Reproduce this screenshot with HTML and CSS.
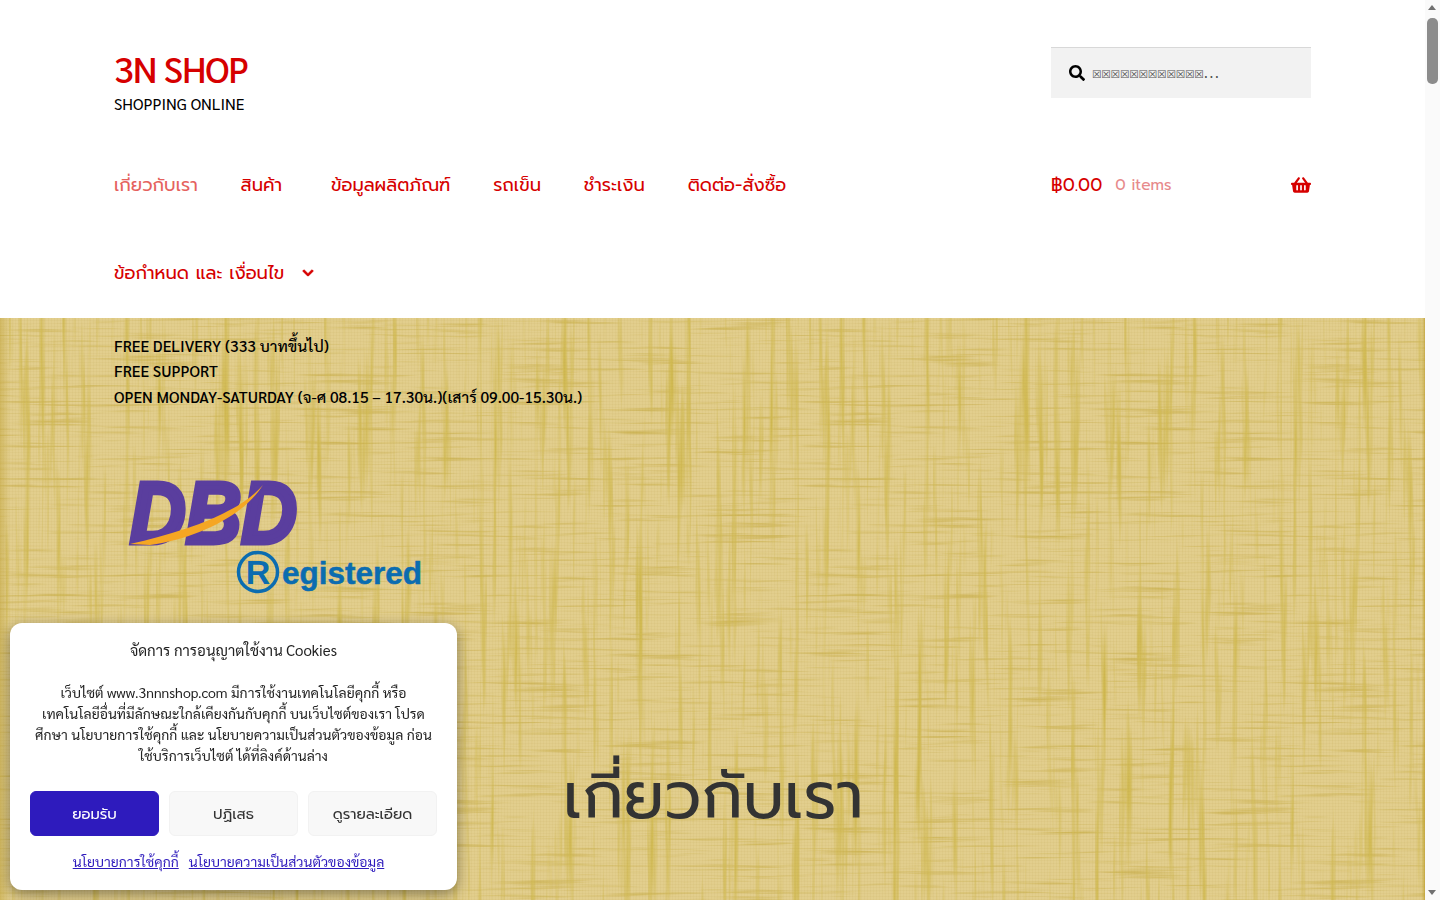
FILE: index.html
```html
<!DOCTYPE html>
<html lang="th">
<head>
<meta charset="utf-8">
<title>เกี่ยวกับเรา – 3N SHOP</title>
<link rel="stylesheet" href="styles.css">
</head>
<body>
<div class="page">
<header class="site-header">
  <div class="col-full brand-row">
    <div class="branding">
      <a class="site-title" href="#">3N SHOP</a>
      <p class="tagline">SHOPPING ONLINE</p>
    </div>
    <form class="search">
      <svg class="search-icon" viewBox="0 0 512 512" aria-hidden="true"><path d="M505 442.700L405.300 343c-4.500-4.500-10.600-7-17-7H372c27.600-35.300 44-79.700 44-128C416 93.100 322.900 0 208 0S0 93.100 0 208s93.100 208 208 208c48.300 0 92.700-16.400 128-44v16.300c0 6.400 2.500 12.500 7 17l99.700 99.700c9.400 9.400 24.600 9.400 33.900 0l28.300-28.300c9.400-9.400 9.400-24.600.1-34zM208 336c-70.700 0-128-57.200-128-128 0-70.700 57.200-128 128-128 70.700 0 128 57.200 128 128 0 70.700-57.200 128-128 128z"/></svg>
      <span class="search-ph"><span class="tofu">☒☒☒☒☒☒☒☒☒☒☒☒</span>...</span>
    </form>
  </div>
  <div class="col-full nav-row">
    <nav class="main-nav">
      <a class="nav-link current" href="#">เกี่ยวกับเรา</a>
      <a class="nav-link wide" href="#">สินค้า</a>
      <a class="nav-link" href="#">ข้อมูลผลิตภัณฑ์</a>
      <a class="nav-link" href="#">รถเข็น</a>
      <a class="nav-link" href="#">ชำระเงิน</a>
      <a class="nav-link" href="#">ติดต่อ-สั่งซื้อ</a>
      <a class="nav-link" href="#">ข้อกำหนด และ เงื่อนไข<svg class="chevron" viewBox="0 0 448 512" aria-hidden="true"><path d="M207 381.500L12.700 187.100c-9.400-9.400-9.400-24.600 0-33.900l22.700-22.700c9.400-9.400 24.500-9.400 33.900 0L224 284.500l154.700-154c9.400-9.300 24.500-9.300 33.900 0l22.700 22.700c9.400 9.400 9.400 24.600 0 33.900L241 381.500c-9.400 9.300-24.600 9.300-34 0z"/></svg></a>
    </nav>
    <a class="cart" href="#">
      <span class="amount">฿0.00</span>
      <span class="count">0 items</span>
      <svg class="basket" viewBox="0 0 576 512" aria-hidden="true"><path d="M576 216v16c0 13.300-10.700 24-24 24h-8l-26.100 182.800C514.500 462.500 494.200 480 470.300 480H105.700c-23.900 0-44.200-17.500-47.500-41.200L32 256h-8c-13.300 0-24-10.700-24-24v-16c0-13.300 10.700-24 24-24h67.300l106.800-146.800c10.400-14.300 30.400-17.500 44.700-7.100 14.300 10.400 17.500 30.400 7.100 44.700L170.400 192h235.200L326.100 82.800c-10.400-14.300-7.200-34.300 7.100-44.700 14.300-10.400 34.300-7.200 44.700 7.100L484.700 192H552c13.300 0 24 10.700 24 24zM312 392V280c0-13.300-10.700-24-24-24s-24 10.700-24 24v112c0 13.300 10.700 24 24 24s24-10.700 24-24zm112 0V280c0-13.300-10.700-24-24-24s-24 10.700-24 24v112c0 13.300 10.700 24 24 24s24-10.700 24-24zm-224 0V280c0-13.300-10.700-24-24-24s-24 10.700-24 24v112c0 13.300 10.700 24 24 24s24-10.700 24-24z"/></svg>
    </a>
  </div>
</header>

<main class="content">
  <div class="col-full">
    <div class="notice">
      <p>FREE DELIVERY (333 บาทขึ้นไป)</p>
      <p>FREE SUPPORT</p>
      <p>OPEN MONDAY-SATURDAY (จ-ศ 08.15 – 17.30น.)(เสาร์ 09.00-15.30น.)</p>
    </div>
    <div class="columns">
      <aside class="sidebar">
        <svg class="dbd" viewBox="0 0 320 150" role="img" aria-label="DBD Registered">
          <text class="dbd-letters" x="16" y="90" textLength="167" lengthAdjust="spacingAndGlyphs">DBD</text>
          <path class="dbd-swoosh" d="M16 91C70 79 125 60 149 32C130 62 85 85 36 92Z"/>
          <circle class="reg-ring" cx="144" cy="119" r="19.500"/>
          <text class="reg-r" x="144" y="131" text-anchor="middle">R</text>
          <text class="reg-word" x="168" y="131" textLength="140" lengthAdjust="spacingAndGlyphs">egistered</text>
        </svg>
      </aside>
      <article class="article">
        <h1 class="page-title">เกี่ยวกับเรา</h1>
      </article>
    </div>
  </div>
</main>
</div>

<section class="cookie">
  <p class="cookie-title">จัดการ การอนุญาตใช้งาน Cookies</p>
  <p class="cookie-text">เว็บไซต์ www.3nnnshop.com มีการใช้งานเทคโนโลยีคุกกี้ หรือ เทคโนโลยีอื่นที่มีลักษณะใกล้เคียงกันกับคุกกี้ บนเว็บไซต์ของเรา โปรดศึกษา นโยบายการใช้คุกกี้ และ นโยบายความเป็นส่วนตัวของข้อมูล ก่อนใช้บริการเว็บไซต์ ได้ที่ลิงค์ด้านล่าง</p>
  <div class="cookie-buttons">
    <button class="btn btn-accept" type="button">ยอมรับ</button>
    <button class="btn" type="button">ปฏิเสธ</button>
    <button class="btn" type="button">ดูรายละเอียด</button>
  </div>
  <div class="cookie-links">
    <a href="#">นโยบายการใช้คุกกี้</a>
    <a href="#">นโยบายความเป็นส่วนตัวของข้อมูล</a>
  </div>
</section>

<div class="scrollbar" aria-hidden="true">
  <span class="sb-arrow sb-up"></span>
  <span class="sb-thumb"></span>
  <span class="sb-arrow sb-down"></span>
</div>
</body>
</html>
```
FILE: styles.css
```css
* { box-sizing: border-box; }
html, body { height: 900px; overflow: hidden; }
body {
  margin: 0;
  font-family: "Sarabun", sans-serif;
  color: #000;
  background: #fff;
}
p { margin: 0; }
a { text-decoration: none; color: inherit; }
.page { width: 1425px; height: 900px; overflow: hidden; }
.col-full { width: 1197px; margin: 0 auto; }

.site-header { background: #fff; height: 318px; }
.brand-row { display: flex; justify-content: space-between; padding-top: 44px; height: 140px; }
.site-title { display: block; color: #d60000; font-size: 36px; font-weight: 500; line-height: 49px; letter-spacing: -1.2px; }
.tagline { font-size: 15.750px; line-height: 22px; }
.search { width: 260px; height: 51px; margin-top: 3px; background: #f2f2f2; border-top: 1px solid #d8d8d8; display: flex; align-items: center; padding-left: 18px; gap: 7px; }
.search-icon { width: 16px; height: 16px; fill: #000; }
.search-ph { font-family: "DejaVu Sans", sans-serif; font-size: 15px; color: #505050; letter-spacing: .7px; white-space: nowrap; }
.tofu { font-size: 10.600px; letter-spacing: -.200px; }

.nav-row { display: flex; justify-content: space-between; align-items: flex-start; }
.main-nav { width: 740px; display: flex; flex-wrap: wrap; column-gap: 42.800px; }
.nav-link { color: #d60000; font-family: "Prompt", sans-serif; font-size: 18px; font-weight: 400; height: 88px; line-height: 90px; white-space: nowrap; }
.nav-link.current { color: #e5625e; }
.nav-link.wide { margin-right: 6px; }
.chevron { width: 12px; height: 12px; fill: #d60000; stroke: #d60000; stroke-width: 36px; margin-left: 18px; }
.cart { width: 260px; height: 90px; display: flex; align-items: center; color: #d60000; font-family: "Prompt", sans-serif; font-weight: 400; }
.amount { font-size: 18px; }
.count { font-size: 15.500px; margin-left: 13px; color: #e78a8c; }
.basket { width: 20px; height: 18px; fill: #d60000; margin-left: auto; }

.content {
  height: 582px;
  background-color: #e2ce8d;
  background-image:
    linear-gradient(90deg, rgba(190,160,50,.45), rgba(190,160,50,0) 10px, rgba(190,160,50,0) calc(100% - 3px), rgba(190,160,50,.8)),
    repeating-linear-gradient(0deg, rgba(170,140,50,.06) 0 1px, rgba(170,140,50,0) 1px 3px),
    repeating-linear-gradient(90deg, rgba(170,140,50,.06) 0 1px, rgba(170,140,50,0) 1px 3px),
    url("data:image/svg+xml,%3Csvg xmlns='http://www.w3.org/2000/svg' width='800' height='800'%3E%3Cfilter id='h' x='0' y='0' width='100%25' height='100%25' color-interpolation-filters='sRGB'%3E%3CfeTurbulence type='fractalNoise' baseFrequency='0.01 0.3' numOctaves='3' seed='4' stitchTiles='stitch'/%3E%3CfeColorMatrix values='0 0 0 0 0.8 0 0 0 0 0.7 0 0 0 0 0.32 0 0 0 2.4 -1.3'/%3E%3C/filter%3E%3Cfilter id='v' x='0' y='0' width='100%25' height='100%25' color-interpolation-filters='sRGB'%3E%3CfeTurbulence type='fractalNoise' baseFrequency='0.13 0.005' numOctaves='3' seed='9' stitchTiles='stitch'/%3E%3CfeColorMatrix values='0 0 0 0 0.82 0 0 0 0 0.73 0 0 0 0 0.32 0 0 0 3.2 -1.7'/%3E%3C/filter%3E%3Crect width='800' height='800' filter='url(%23h)'/%3E%3Crect width='800' height='800' filter='url(%23v)'/%3E%3C/svg%3E");
  padding-top: 15px;
}
.notice { font-size: 15.550px; line-height: 25.4px; font-weight: 500; }
.columns { display: flex; margin-top: 44px; }
.sidebar { width: 449px; flex: none; }
.dbd { display: block; width: 320px; height: 150px; }
.dbd-letters { font-family: "Liberation Sans", sans-serif; font-weight: 700; font-style: italic; font-size: 88px; fill: #5a3e9e; stroke: #5a3e9e; stroke-width: 5px; }
.dbd-swoosh { fill: #f5a623; }
.reg-ring { fill: none; stroke: #0b6cb0; stroke-width: 3.500px; }
.reg-r { font-family: "Liberation Sans", sans-serif; font-weight: 700; font-size: 34px; fill: #0b6cb0; }
.reg-word { font-family: "Liberation Sans", sans-serif; font-weight: 700; font-size: 32px; fill: #0b6cb0; stroke: #0b6cb0; stroke-width: .5px; }
.article { flex: 1; padding-top: 305px; }
.page-title { margin: 0; font-family: "Prompt", sans-serif; font-weight: 400; font-size: 64.600px; line-height: 1.2; color: #333; }

.cookie {
  position: fixed;
  left: 10px;
  bottom: 10px;
  width: 447px;
  height: 267px;
  padding: 16px 20px 0;
  background: #fff;
  border-radius: 12px;
  box-shadow: 0 4px 14px rgba(0,0,0,.4);
  text-align: center;
  color: #222;
  font-size: 14px;
  line-height: 21px;
}
.cookie-title { margin-bottom: 22px; font-size: 15px; }
.cookie-text { margin-bottom: 25px; }
.cookie-buttons { display: grid; grid-template-columns: repeat(3, 1fr); gap: 10px; }
.btn { height: 45px; border: 1px solid #f2f2f2; border-radius: 6px; background: #f8f8f8; color: #333; font-family: "Prompt", sans-serif; font-weight: 400; font-size: 14.800px; }
.btn-accept { background: #2e1bbd; border-color: #2e1bbd; color: #fff; }
.cookie-links { display: flex; justify-content: center; gap: 10px; margin-top: 15px; padding-right: 10px; }
.cookie-links a { color: #2e1bbd; text-decoration: underline; }

.scrollbar { position: fixed; top: 0; right: 0; bottom: 0; width: 15px; background: #fafafa; }
.sb-thumb { position: absolute; top: 18px; left: 2px; width: 11px; height: 66px; border-radius: 5px; background: #8c8c8c; }
.sb-arrow { position: absolute; left: 3px; width: 0; height: 0; border-left: 4.500px solid transparent; border-right: 4.500px solid transparent; }
.sb-up { top: 5px; border-bottom: 5px solid #707070; }
.sb-down { bottom: 5px; border-top: 5px solid #707070; }
```
